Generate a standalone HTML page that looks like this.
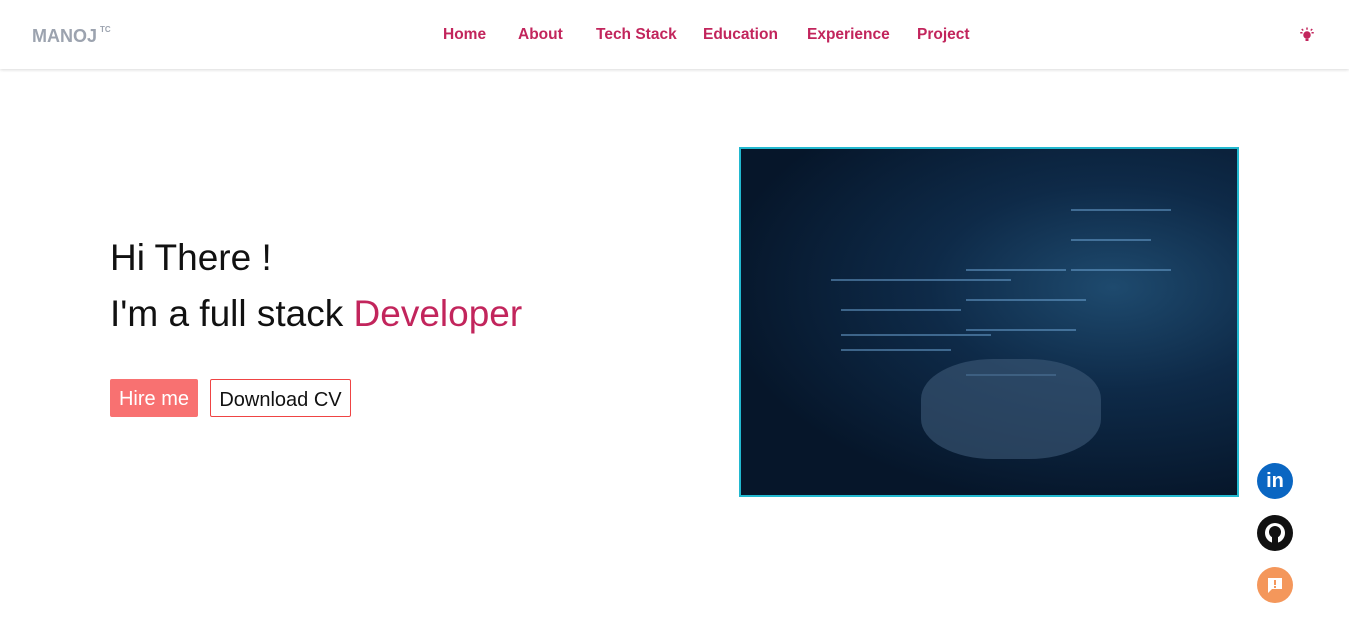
<!DOCTYPE html>
<html><head><style>
body{margin:0;width:1349px;height:643px;background:#fff;font-family:"Liberation Sans",sans-serif;position:relative;overflow:hidden}
.nav{position:absolute;top:0;left:0;width:1349px;height:69px;background:#fff;box-shadow:0 1px 3px rgba(0,0,0,.15)}
.logo{position:absolute;left:32px;top:26px;font-weight:bold;font-size:18px;color:#9ca3af}
.logo sup{font-size:8px;position:relative;top:-3px;margin-left:3px}
.links{position:absolute;top:26px;left:443px;font-size:15.5px;color:#c2255c;font-weight:bold}
.links span{position:absolute;white-space:nowrap}
h1{position:absolute;margin:0;font-weight:normal;font-size:37px;color:#111;left:110px}
.btn1{position:absolute;left:110px;top:379px;width:88px;height:38px;background:#f87171;color:#fff;font-size:20px;line-height:40px;text-align:center;border-radius:2px}
.btn2{position:absolute;left:210px;top:379px;width:139px;height:36px;border:1px solid #ef4444;color:#111;font-size:20px;line-height:40px;text-align:center;border-radius:2px}
.img{position:absolute;left:739px;top:147px;width:496px;height:346px;border:2px solid #22b8cf;background:radial-gradient(ellipse at 75% 40%,#1e4a6e 0%,#0e2a48 35%,#06162a 75%),#06162a;overflow:hidden}
.ln{position:absolute;height:2px;background:#6fa8d8;opacity:.5}
.ic{position:absolute;left:1257px;width:36px;height:36px;border-radius:50%}
</style></head><body>
<div class="nav"><div class="logo">MANOJ<sup>TC</sup></div>
<div class="links"><span style="left:0">Home</span><span style="left:75px">About</span><span style="left:153px">Tech Stack</span><span style="left:260px">Education</span><span style="left:364px">Experience</span><span style="left:474px">Project</span></div>
<svg style="position:absolute;left:1298px;top:26px" width="18" height="18" viewBox="0 0 24 24"><circle cx="12" cy="12" r="5" fill="#c2255c"/><rect x="10" y="17" width="4" height="3" fill="#c2255c"/><path d="M12 2v3M3 9h3M18 9h3M5 4l2 2M19 4l-2 2" stroke="#c2255c" stroke-width="2"/></svg>
</div>
<h1 style="top:237px">Hi There !</h1>
<h1 style="top:293px">I'm a full stack <span style="color:#c2255c">Developer</span></h1>
<div class="btn1">Hire me</div><div class="btn2">Download CV</div>
<div class="img">
<div class="ln" style="left:90px;top:130px;width:180px"></div>
<div class="ln" style="left:100px;top:160px;width:120px"></div>
<div class="ln" style="left:100px;top:185px;width:150px"></div>
<div class="ln" style="left:100px;top:200px;width:110px"></div>
<div class="ln" style="left:225px;top:120px;width:100px"></div>
<div class="ln" style="left:225px;top:150px;width:120px"></div>
<div class="ln" style="left:225px;top:180px;width:110px"></div>
<div class="ln" style="left:225px;top:225px;width:90px"></div>
<div class="ln" style="left:330px;top:60px;width:100px"></div>
<div class="ln" style="left:330px;top:90px;width:80px"></div>
<div class="ln" style="left:330px;top:120px;width:100px"></div>
<div style="position:absolute;left:180px;top:210px;width:180px;height:100px;border-radius:40%;background:#3d5a78;opacity:.6"></div>
</div>
<div class="ic" style="top:463px;background:#0a66c2;color:#fff;font-weight:bold;font-size:20px;text-align:center;line-height:36px">in</div>
<div class="ic" style="top:515px;background:#111"><svg width="36" height="36" viewBox="0 0 36 36"><circle cx="18" cy="18" r="10" fill="#fff"/><circle cx="18" cy="17" r="6" fill="#111"/><rect x="15" y="22" width="6" height="6" fill="#111"/></svg></div>
<div class="ic" style="top:567px;background:#f4975b"><svg width="36" height="36" viewBox="0 0 36 36"><path d="M11 11h14v11H15l-4 4z" fill="#fff"/><rect x="17" y="13" width="2" height="5" fill="#f4975b"/><rect x="17" y="19" width="2" height="2" fill="#f4975b"/></svg></div>
</body></html>
